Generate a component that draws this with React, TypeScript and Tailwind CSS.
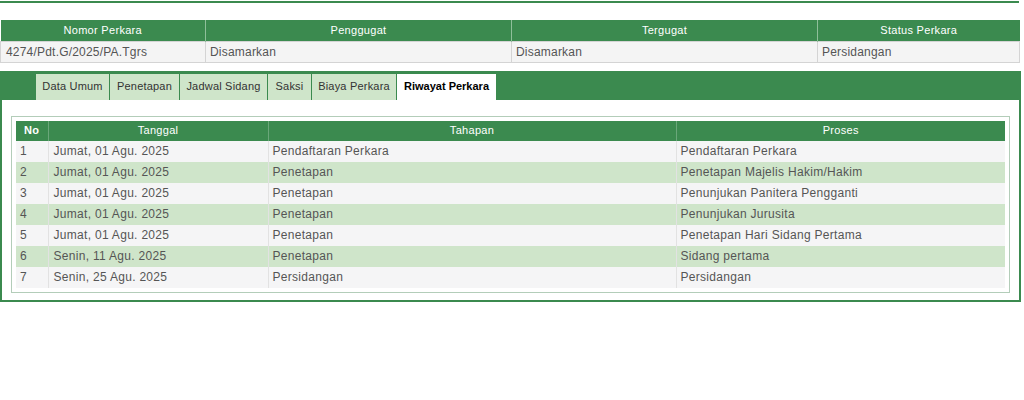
const tabs = [
  { label: 'Data Umum', width: 'w-[74px]' },
  { label: 'Penetapan', width: 'w-[70px]' },
  { label: 'Jadwal Sidang', width: 'w-[88px]' },
  { label: 'Saksi', width: 'w-[44px]' },
  { label: 'Biaya Perkara', width: 'w-[85px]' },
  { label: 'Riwayat Perkara', width: 'w-[100px]' },
];

const riwayat = [
  { no: 1, tanggal: 'Jumat, 01 Agu. 2025', tahapan: 'Pendaftaran Perkara', proses: 'Pendaftaran Perkara' },
  { no: 2, tanggal: 'Jumat, 01 Agu. 2025', tahapan: 'Penetapan', proses: 'Penetapan Majelis Hakim/Hakim' },
  { no: 3, tanggal: 'Jumat, 01 Agu. 2025', tahapan: 'Penetapan', proses: 'Penunjukan Panitera Pengganti' },
  { no: 4, tanggal: 'Jumat, 01 Agu. 2025', tahapan: 'Penetapan', proses: 'Penunjukan Jurusita' },
  { no: 5, tanggal: 'Jumat, 01 Agu. 2025', tahapan: 'Penetapan', proses: 'Penetapan Hari Sidang Pertama' },
  { no: 6, tanggal: 'Senin, 11 Agu. 2025', tahapan: 'Penetapan', proses: 'Sidang pertama' },
  { no: 7, tanggal: 'Senin, 25 Agu. 2025', tahapan: 'Persidangan', proses: 'Persidangan' },
];

export default function App() {
  return (
    <div className="min-h-[400px] bg-white font-['Liberation_Sans',Arial,sans-serif] text-[12px] text-[#555]">
      <div className="pt-[1px]">
        <div className="h-[2px] w-[1019px] bg-[#3b8a4f]" />
      </div>

      {/* ringkasan perkara */}
      <table className="mt-[17px] w-[1020px] table-fixed border-collapse">
        <thead>
          <tr className="h-[21px] bg-[#3b8a4f] text-[11px] tracking-[0.3px] text-white">
            <th className="w-[205px] border-r border-[#8fbf9a] font-normal">Nomor Perkara</th>
            <th className="w-[306px] border-r border-[#8fbf9a] font-normal">Penggugat</th>
            <th className="w-[306px] border-r border-[#8fbf9a] font-normal">Tergugat</th>
            <th className="font-normal">Status Perkara</th>
          </tr>
        </thead>
        <tbody>
          <tr className="h-[21px] bg-[#f4f4f4] tracking-[0.2px]">
            <td className="border border-[#d4d4d4] px-[5px]">4274/Pdt.G/2025/PA.Tgrs</td>
            <td className="border border-[#d4d4d4] px-[4px]">Disamarkan</td>
            <td className="border border-[#d4d4d4] px-[4px]">Disamarkan</td>
            <td className="border border-[#d4d4d4] px-[4px]">Persidangan</td>
          </tr>
        </tbody>
      </table>

      {/* panel tab */}
      <div className="mt-[8px] w-[1021px] border-2 border-[#3b8a4f]">
        <div className="flex h-[27px] items-end bg-[#3b8a4f] pl-[33px]">
          {tabs.map(tab => {
            const active = tab.label === 'Riwayat Perkara';
            return (
              <div
                key={tab.label}
                className={`${tab.width} ${
                  active
                    ? 'flex h-[26px] items-center justify-center border-l border-[#3b8a4f] bg-white text-[11px] font-bold text-black'
                    : 'flex h-[26px] items-center justify-center border-l border-[#3b8a4f] bg-[#cfe5ca] text-[11px] tracking-[0.2px] text-[#333]'
                }`}
              >
                {tab.label}
              </div>
            );
          })}
        </div>

        <div className="bg-white px-[9px] pt-[16px] pb-[7px]">
          <div className="border border-[#b3cdb9] p-[4px]">
            <table className="w-full table-fixed border-collapse">
              <thead>
                <tr className="h-[20px] bg-[#3b8a4f] text-[11px] tracking-[0.3px] text-white">
                  <th className="w-[32px] border-r border-[#6aa77a] font-bold">No</th>
                  <th className="w-[220px] border-r border-[#6aa77a] font-normal">Tanggal</th>
                  <th className="w-[408px] border-r border-[#6aa77a] font-normal">Tahapan</th>
                  <th className="font-normal">Proses</th>
                </tr>
              </thead>
              <tbody>
                {riwayat.map(row => (
                  <tr
                    key={row.no}
                    className={row.no % 2 === 0 ? 'h-[21px] bg-[#cfe5ca] tracking-[0.3px]' : 'h-[21px] bg-[#f5f5f6] tracking-[0.3px]'}
                  >
                    <td className="border-r border-[#e2e2e2] px-[4px]">{row.no}</td>
                    <td className="border-r border-[#e2e2e2] px-[5px]">{row.tanggal}</td>
                    <td className="border-r border-[#e2e2e2] px-[4px]">{row.tahapan}</td>
                    <td className="px-[4px]">{row.proses}</td>
                  </tr>
                ))}
              </tbody>
            </table>
          </div>
        </div>
      </div>
    </div>
  );
}
